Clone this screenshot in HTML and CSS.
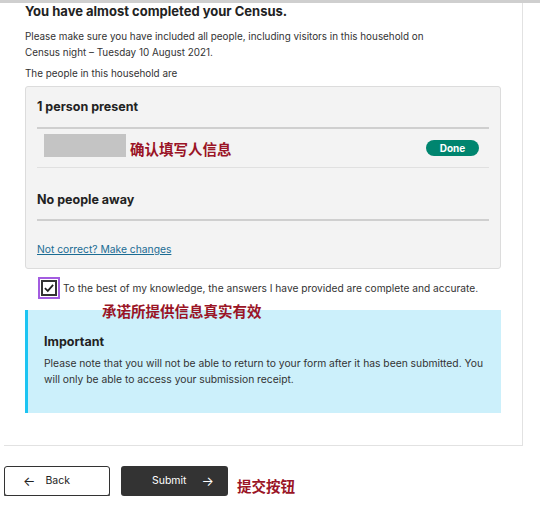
FILE: index.html
```html
<!DOCTYPE html>
<html lang="en">
<head>
  <meta charset="UTF-8">
  <title>Census - Submit</title>
  <link rel="stylesheet" href="styles.css">
</head>
<body>
  <div class="top-rule"></div>

  <div class="card">
    <h1 class="title">You have almost completed your Census.</h1>
    <p class="intro">Please make sure you have included all people, including visitors in this household on Census night &ndash; Tuesday 10 August 2021.</p>
    <p class="lead">The people in this household are</p>

    <div class="summary">
      <h2 class="summary-title">1 person present</h2>
      <div class="person-row">
        <span class="name-mask"></span>
        <span class="note">确认填写人信息</span>
        <span class="badge">Done</span>
      </div>

      <h2 class="summary-title away">No people away</h2>
      <div class="summary-gap"></div>
      <a class="change-link" href="#">Not correct? Make changes</a>
    </div>

    <label class="confirm">
      <span class="check-focus">
        <span class="check-box">
          <svg viewBox="0 0 14 14" width="12" height="12"><path d="M2.2 7.2 L5.6 10.4 L11.8 3.4" fill="none" stroke="#222" stroke-width="2"/></svg>
        </span>
      </span>
      <span class="confirm-text">To the best of my knowledge, the answers I have provided are complete and accurate.</span>
    </label>
    <div class="note note-promise">承诺所提供信息真实有效</div>

    <div class="panel">
      <h3 class="panel-title">Important</h3>
      <p class="panel-text">Please note that you will not be able to return to your form after it has been submitted. You will only be able to access your submission receipt.</p>
    </div>
  </div>

  <div class="actions">
    <button class="btn btn-back"><span class="arrow">&larr;</span>Back</button>
    <button class="btn btn-submit">Submit<span class="arrow">&rarr;</span></button>
    <span class="note">提交按钮</span>
  </div>
</body>
</html>
```

FILE: styles.css
```css
body {
  margin: 0;
  background: #fff;
  font-family: Inter, "Noto Sans", sans-serif;
  color: #333;
}
.top-rule {
  height: 3px;
  background: #cfcfcf;
}
.card {
  width: 497px;
  margin-left: 4px;
  padding: 0 0 32px 21px;
  border-right: 1px solid #e2e2e2;
  border-bottom: 1px solid #e2e2e2;
}
.title {
  margin: 0;
  font-size: 13px;
  line-height: 16px;
  font-weight: 700;
  color: #222;
}
.intro {
  margin: 9px 0 0;
  font-size: 9.9px;
  line-height: 16px;
  width: 420px;
}
.lead {
  margin: 5px 0 0;
  font-size: 9.9px;
  line-height: 16px;
}
.summary {
  margin-top: 5px;
  width: 452px;
  padding: 10px 11px 11px;
  background: #f3f3f3;
  border: 1px solid #dcdcdc;
  border-radius: 3px;
}
.summary-title {
  margin: 0;
  padding-bottom: 10px;
  border-bottom: 2px solid #cfcfcf;
  font-size: 12.5px;
  line-height: 20px;
  font-weight: 700;
  color: #222;
}
.summary-title.away {
  margin-top: 22px;
  padding-bottom: 9px;
}
.person-row {
  display: flex;
  align-items: center;
  height: 38px;
  padding-left: 7px;
  border-bottom: 1px solid #e0e0e0;
}
.name-mask {
  width: 82px;
  height: 23px;
  background: #c4c4c4;
  margin-top: -6px;
}
.note {
  font-family: "Noto Sans CJK SC", sans-serif;
  font-size: 14.5px;
  font-weight: 700;
  color: #9a1426;
}
.person-row .note {
  margin-left: 4px;
}
.badge {
  margin-left: auto;
  margin-right: 10px;
  width: 53px;
  height: 16px;
  line-height: 16px;
  border-radius: 8px;
  background: #00856f;
  color: #fff;
  font-size: 10px;
  font-weight: 700;
  text-align: center;
}
.summary-gap {
  height: 16px;
}
.change-link {
  font-size: 10.3px;
  line-height: 16px;
  color: #1b6c93;
  text-decoration: underline;
}
.confirm {
  display: flex;
  align-items: center;
  margin: 8px 0 0 13px;
  gap: 3px;
}
.check-focus {
  display: flex;
  align-items: center;
  justify-content: center;
  width: 18px;
  height: 18px;
  border: 2px solid #a35ce0;
}
.check-box {
  display: flex;
  align-items: center;
  justify-content: center;
  width: 12px;
  height: 12px;
  border: 2px solid #333;
  background: #fff;
}
.confirm-text {
  font-size: 10.2px;
  color: #333;
}
.note-promise {
  margin: 2px 0 0 77px;
  line-height: 20px;
}
.panel {
  margin-top: -11px;
  width: 457px;
  padding: 23px 0 26px 16px;
  background: #ccf0fb;
  border-left: 3px solid #1cc4f2;
}
.panel-title {
  margin: 0;
  font-size: 12.5px;
  line-height: 18px;
  font-weight: 700;
  color: #222;
}
.panel-text {
  margin: 4px 0 0;
  width: 445px;
  font-size: 10.3px;
  line-height: 16px;
  color: #333;
}
.actions {
  display: flex;
  align-items: center;
  gap: 11px;
  margin: 19px 0 0 4px;
}
.btn {
  height: 30px;
  font-family: Inter, sans-serif;
  font-size: 10.5px;
  border-radius: 3px;
  display: flex;
  align-items: center;
}
.btn-back {
  width: 106px;
  padding: 0 0 0 18px;
  background: #fff;
  color: #222;
  border: 1px solid #333;
  box-shadow: 0 1px 0 #333;
}
.btn-back .arrow {
  margin-right: 10px;
  font-size: 13px;
}
.btn-submit {
  width: 107px;
  padding: 0 0 0 31px;
  background: #333;
  color: #fff;
  border: 0;
}
.btn-submit .arrow {
  margin-left: 15px;
  font-size: 13px;
}
.actions .note {
  margin-left: -2px;
  margin-top: 10px;
}
```
